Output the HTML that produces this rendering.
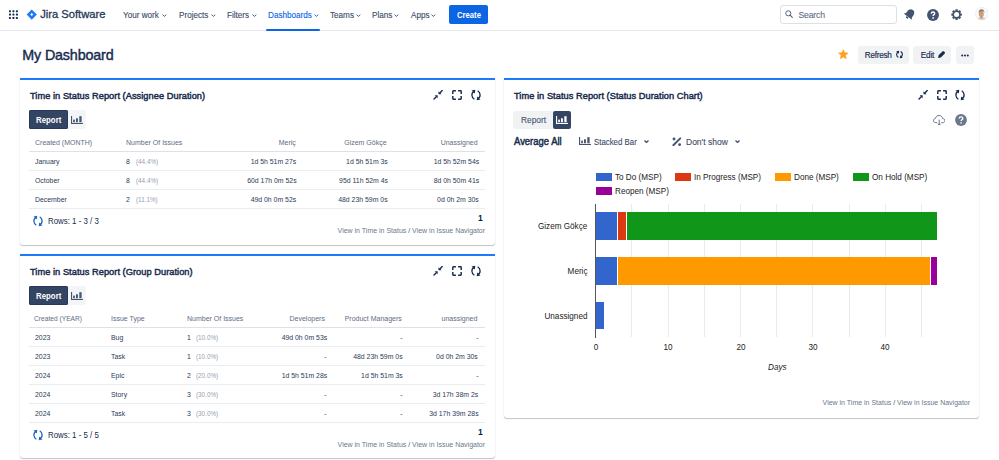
<!DOCTYPE html>
<html><head><meta charset="utf-8">
<style>
*{box-sizing:border-box;margin:0;padding:0}
html,body{width:999px;height:460px;overflow:hidden;background:#fff}
body{position:relative;font-family:"Liberation Sans",sans-serif;color:#172b4d}
.a{position:absolute;white-space:nowrap}
.t{position:absolute;white-space:nowrap;line-height:12px}
.nav{font-size:8.8px;color:#3b4b66;top:9.3px;-webkit-text-stroke:0.12px #3b4b66;transform:scaleX(.925);transform-origin:0 50%}
.chev{position:absolute;width:5px;height:3px}
.panel{position:absolute;background:#fff;border-top:2px solid #1d7afc;border-radius:0 0 3px 3px;box-shadow:0 1px 1px rgba(9,30,66,.25),0 0 1px rgba(9,30,66,.18)}
.ptitle{font-size:9.4px;color:#172b4d;transform:scaleX(.985);-webkit-text-stroke:0.45px #172b4d;letter-spacing:0.05px}
.th{font-size:7.7px;color:#5e6c84;transform:scaleX(.91)}
.td{font-size:7.9px;color:#2b3b56;transform:scaleX(.873)}
.rows{font-size:9.5px;color:#172b4d;transform:scaleX(.83)}
.vw{font-size:7.7px;color:#6b778c;transform:scaleX(.91)}
.pc{color:#97a0af}
.hl{position:absolute;height:1px;background:#ebecf0}
.hl2{position:absolute;height:1px;background:#dfe1e6}
.r{text-align:right}
.gl{position:absolute;width:1px;background:#ebebeb;top:204px;height:133px}
.ct{font-size:8.8px;color:#222;transform:scaleX(.926)}
.sq{position:absolute;width:16px;height:8px}
</style></head><body>

<!-- ===== HEADER ===== -->
<div class="a" style="left:0;top:30px;width:999px;height:1px;background:#e4e6ea"></div>
<!-- grid icon -->
<svg class="a" style="left:0;top:0" width="40" height="30" viewBox="0 0 40 30"><g fill="#172b4d"><rect x="8.98" y="10.18" width="2.0" height="2.0" rx="0.45"/><rect x="8.98" y="13.60" width="2.0" height="2.0" rx="0.45"/><rect x="8.98" y="17.05" width="2.0" height="2.0" rx="0.45"/><rect x="12.43" y="10.18" width="2.0" height="2.0" rx="0.45"/><rect x="12.43" y="13.60" width="2.0" height="2.0" rx="0.45"/><rect x="12.43" y="17.05" width="2.0" height="2.0" rx="0.45"/><rect x="15.92" y="10.18" width="2.0" height="2.0" rx="0.45"/><rect x="15.92" y="13.60" width="2.0" height="2.0" rx="0.45"/><rect x="15.92" y="17.05" width="2.0" height="2.0" rx="0.45"/></g>
<path d="M31.75 9.5 L36.85 14.6 L31.75 19.7 L26.65 14.6 Z" fill="#1d7afc"/><path d="M31.75 13.1 L33.25 14.6 L31.75 16.1 L30.25 14.6 Z" fill="#fff"/></svg>
<div class="t" style="left:40.2px;top:8.2px;font-size:11.2px;color:#253858;-webkit-text-stroke:0.3px #253858">Jira Software</div>

<div class="t nav" style="left:122.5px">Your work</div>
<div class="t nav" style="left:178.8px">Projects</div>
<div class="t nav" style="left:227px">Filters</div>
<div class="t nav" style="left:267.8px;color:#0c66e4;-webkit-text-stroke:0.12px #0c66e4">Dashboards</div>
<div class="t nav" style="left:330.4px">Teams</div>
<div class="t nav" style="left:372.4px">Plans</div>
<div class="t nav" style="left:410.8px">Apps</div>
<svg class="a" style="left:162.2px;top:13.6px" width="4.8" height="3" viewBox="0 0 5 3"><path d="M.5 .6 L2.5 2.4 L4.5 .6" fill="none" stroke="#44546f" stroke-width="1.0"/></svg>
<svg class="a" style="left:210.8px;top:13.6px" width="4.8" height="3" viewBox="0 0 5 3"><path d="M.5 .6 L2.5 2.4 L4.5 .6" fill="none" stroke="#44546f" stroke-width="1.0"/></svg>
<svg class="a" style="left:251.9px;top:13.6px" width="4.8" height="3" viewBox="0 0 5 3"><path d="M.5 .6 L2.5 2.4 L4.5 .6" fill="none" stroke="#44546f" stroke-width="1.0"/></svg>
<svg class="a" style="left:313.9px;top:13.6px" width="4.8" height="3" viewBox="0 0 5 3"><path d="M.5 .6 L2.5 2.4 L4.5 .6" fill="none" stroke="#0c66e4" stroke-width="1.0"/></svg>
<svg class="a" style="left:355.9px;top:13.6px" width="4.8" height="3" viewBox="0 0 5 3"><path d="M.5 .6 L2.5 2.4 L4.5 .6" fill="none" stroke="#44546f" stroke-width="1.0"/></svg>
<svg class="a" style="left:393.9px;top:13.6px" width="4.8" height="3" viewBox="0 0 5 3"><path d="M.5 .6 L2.5 2.4 L4.5 .6" fill="none" stroke="#44546f" stroke-width="1.0"/></svg>
<svg class="a" style="left:431.1px;top:13.6px" width="4.8" height="3" viewBox="0 0 5 3"><path d="M.5 .6 L2.5 2.4 L4.5 .6" fill="none" stroke="#44546f" stroke-width="1.0"/></svg>
<div class="a" style="left:266px;top:29px;width:54px;height:2px;background:#0c66e4;border-radius:1px"></div>
<div class="a" style="left:449px;top:5px;width:38.5px;height:19px;background:#0c66e4;border-radius:2px"></div>
<div class="t" style="left:456.6px;top:8.5px;font-size:8.5px;font-weight:bold;color:#fff;transform:scaleX(.905);transform-origin:0 50%">Create</div>

<!-- search -->
<div class="a" style="left:780px;top:5px;width:117px;height:19px;border:1px solid #dcdfe4;border-radius:3px"></div>
<svg class="a" style="left:785px;top:10.2px" width="8" height="8" viewBox="0 0 8 8"><circle cx="3.3" cy="3.3" r="2.55" fill="none" stroke="#505f79" stroke-width="0.95"/><path d="M5.1 5.1 L7.3 7.3" stroke="#505f79" stroke-width="1.1" stroke-linecap="round"/></svg>
<div class="t" style="left:798.5px;top:8.8px;font-size:8.7px;letter-spacing:-0.2px;color:#5e6c84;-webkit-text-stroke:0.1px #5e6c84">Search</div>
<!-- bell -->
<svg class="a" style="left:904.3px;top:9.3px" width="11.5" height="10.5" viewBox="0 0 11 10"><g transform="rotate(38 5.8 5)"><path d="M5.5 0.2 C3.2 0.2 2.0 2.0 2.0 4.3 L2.0 6.3 L0.6 8.2 L10.4 8.2 L9.0 6.3 L9.0 4.3 C9.0 2.0 7.8 0.2 5.5 0.2 Z" fill="#44546f"/><ellipse cx="5.5" cy="9.2" rx="1.3" ry="0.9" fill="#44546f"/></g></svg>
<!-- help -->
<svg class="a" style="left:927.2px;top:9.1px" width="12" height="12" viewBox="0 0 12 12"><circle cx="6" cy="6" r="5.95" fill="#44546f"/><path d="M4.3 4.7 C4.3 3.6 5 3 6 3 C7 3 7.7 3.6 7.7 4.5 C7.7 5.5 6.4 5.8 6.1 6.6 L6.1 7.1" fill="none" stroke="#fff" stroke-width="1.35"/><circle cx="6.1" cy="8.9" r=".85" fill="#fff"/></svg>
<!-- gear -->
<svg class="a" style="left:950.8px;top:9.2px" width="11.2" height="11.2" viewBox="0 0 12 12"><g fill="#44546f"><circle cx="6" cy="6" r="4.4"/><rect x="4.7" y="0.3" width="2.6" height="3" rx="0.5" transform="rotate(0 6 6)"/><rect x="4.7" y="0.3" width="2.6" height="3" rx="0.5" transform="rotate(45 6 6)"/><rect x="4.7" y="0.3" width="2.6" height="3" rx="0.5" transform="rotate(90 6 6)"/><rect x="4.7" y="0.3" width="2.6" height="3" rx="0.5" transform="rotate(135 6 6)"/><rect x="4.7" y="0.3" width="2.6" height="3" rx="0.5" transform="rotate(180 6 6)"/><rect x="4.7" y="0.3" width="2.6" height="3" rx="0.5" transform="rotate(225 6 6)"/><rect x="4.7" y="0.3" width="2.6" height="3" rx="0.5" transform="rotate(270 6 6)"/><rect x="4.7" y="0.3" width="2.6" height="3" rx="0.5" transform="rotate(315 6 6)"/></g><circle cx="6" cy="6" r="2.7" fill="#fff"/></svg>
<!-- avatar -->
<svg class="a" style="left:974.6px;top:7.4px" width="13.6" height="13.4" viewBox="0 0 14 14"><defs><clipPath id="avc"><circle cx="7" cy="7" r="6.4"/></clipPath></defs><circle cx="7" cy="7" r="6.9" fill="#d6eaf6"/><g clip-path="url(#avc)"><rect x="0" y="0" width="14" height="14" fill="#f6f8f9"/><ellipse cx="6.5" cy="7.2" rx="2.6" ry="3.3" fill="#cf9c7c"/><path d="M3.8 6.6 C3.4 3.6 4.8 2.3 6.8 2.3 C8.8 2.3 9.9 3.6 9.6 6.2 L9.1 4.8 C8 4.2 5.6 4.3 4.4 5.2 Z" fill="#8f7d66"/><path d="M5.4 9.8 L7.8 9.8 L8 11 C9.6 11.4 10.6 12.3 10.9 14 L2.4 14 C2.7 12.3 3.6 11.4 5.2 11 Z" fill="#c49a7e"/><path d="M2.6 14 C3 12.6 4 11.8 5.4 11.5 L6.6 12.6 L7.9 11.5 C9.3 11.8 10.3 12.6 10.7 14 Z" fill="#e4e0da"/></g></svg>

<!-- ===== DASHBOARD HEADER ===== -->
<div class="t" style="left:22.3px;top:48px;font-size:14.3px;line-height:14px;color:#172b4d;letter-spacing:-0.15px;-webkit-text-stroke:0.4px #172b4d">My Dashboard</div>
<svg class="a" style="left:837.6px;top:49.3px" width="10.6" height="10.6" viewBox="0 0 24 24"><path d="M12 1.2 L15.1 8.4 L23 9.1 L17 14.3 L18.8 22.3 L12 18 L5.2 22.3 L7 14.3 L1 9.1 L8.9 8.4 Z" fill="#ff9f1a" stroke="#ff9f1a" stroke-width="1.2" stroke-linejoin="round"/></svg>
<div class="a" style="left:857.5px;top:45.5px;width:51px;height:18.5px;background:#f1f2f4;border-radius:3px"></div>
<div class="t" style="left:864.8px;top:50px;font-size:8.2px;letter-spacing:-0.27px;color:#172b4d;-webkit-text-stroke:0.15px #172b4d">Refresh</div>
<div class="a" style="left:913.3px;top:45.5px;width:37.7px;height:18.5px;background:#f1f2f4;border-radius:3px"></div>
<div class="t" style="left:920.8px;top:50px;font-size:8.2px;letter-spacing:-0.2px;color:#172b4d;-webkit-text-stroke:0.15px #172b4d">Edit</div>
<div class="a" style="left:955.7px;top:45.5px;width:18.5px;height:18.5px;background:#f1f2f4;border-radius:3px"></div>
<svg class="a" style="left:961px;top:54px" width="8" height="3" viewBox="0 0 8 3"><circle cx="1.2" cy="1.5" r="1" fill="#172b4d"/><circle cx="4" cy="1.5" r="1" fill="#172b4d"/><circle cx="6.8" cy="1.5" r="1" fill="#172b4d"/></svg>
<!-- refresh small icon -->
<svg class="a" style="left:895.6px;top:51.3px;overflow:visible" width="7" height="7" viewBox="0 0 10 10"><path d="M3.3 1.4 C1.5 2.3 0.8 3.8 0.9 5.3 C1 6.9 1.9 8.3 3.3 9.2 M6.7 0.8 C8.1 1.7 9.0 3.1 9.1 4.7 C9.2 6.2 8.5 7.7 6.7 8.6" fill="none" stroke="#172b4d" stroke-width="1.6"/><path d="M4.5 -0.3 L0.3 0.3 L3.9 3.9 Z M5.5 10.3 L9.7 9.7 L6.1 6.1 Z" fill="#172b4d"/></svg>
<!-- pencil -->
<svg class="a" style="left:937.8px;top:51.3px" width="7.2" height="7" viewBox="0 0 7 7"><path d="M0 7 L0.5 4.3 L4.3 0.5 C4.8 0 5.6 0 6.1 0.5 L6.5 0.9 C7 1.4 7 2.2 6.5 2.7 L2.7 6.5 Z" fill="#172b4d"/></svg>
<div id="panels">
<div class="panel" style="left:20px;top:78px;width:474.5px;height:167px"></div>
<div class="t ptitle" style="left:29.60px;top:90.20px;line-height:12px;transform-origin:0 50%;">Time in Status Report (Assignee Duration)</div>
<svg class="a" style="left:433.4px;top:90.2px" width="10" height="10" viewBox="0 0 10 10"><g stroke="#172b4d" stroke-width="1.4" fill="none" stroke-linecap="round"><path d="M1.0 9.0 L3.3 6.7"/><path d="M9.2 0.6 L6.9 2.9"/></g><path d="M4.7 5.3 L1.7 5.3 L4.7 8.3 Z" fill="#172b4d"/><path d="M5.5 4.3 L8.5 4.3 L5.5 1.3 Z" fill="#172b4d"/></svg>
<svg class="a" style="left:451.7px;top:90.0px" width="10" height="10" viewBox="0 0 10 10"><path d="M0.8 3.9 V1.4 Q0.8 0.8 1.4 0.8 H3.9 M6.1 0.8 H8.6 Q9.2 0.8 9.2 1.4 V3.9 M9.2 6.1 V8.6 Q9.2 9.2 8.6 9.2 H6.1 M3.9 9.2 H1.4 Q0.8 9.2 0.8 8.6 V6.1" fill="none" stroke="#172b4d" stroke-width="1.45"/></svg>
<svg class="a" style="left:470.8px;top:90.1px;overflow:visible" width="10" height="10" viewBox="0 0 10 10"><path d="M3.3 1.4 C1.5 2.3 0.8 3.8 0.9 5.3 C1 6.9 1.9 8.3 3.3 9.2 M6.7 0.8 C8.1 1.7 9.0 3.1 9.1 4.7 C9.2 6.2 8.5 7.7 6.7 8.6" fill="none" stroke="#172b4d" stroke-width="1.3"/><path d="M4.3 -0.2 L0.5 0.4 L3.8 3.6 Z M5.7 10.2 L9.5 9.6 L6.2 6.4 Z" fill="#172b4d"/></svg>
<div class="a" style="left:28.8px;top:110.4px;width:39px;height:18.3px;background:#344563;border-radius:2px;box-shadow:inset 0 0 0 0.8px #23355a"></div>
<div class="a" style="left:67.8px;top:110.4px;width:17.8px;height:18.3px;background:#f4f5f7;border-radius:0 2px 2px 0"></div>
<div class="t " style="left:35.70px;top:113.90px;line-height:12px;transform-origin:0 50%;font-size:8.6px;font-weight:bold;color:#fff;transform:scaleX(.915)">Report</div>
<svg class="a" style="left:71.1px;top:115.8px" width="12" height="8" viewBox="0 0 12 8"><g fill="#44546f"><rect x="0" y="0" width="1.1" height="8"/><rect x="0" y="6.9" width="12" height="1.1"/><rect x="2.2" y="3.6" width="1.7" height="2.6"/><rect x="5.0" y="2.3" width="1.9" height="3.9"/><rect x="8.3" y="0.2" width="2.3" height="6.0"/></g></svg>
<div class="t th" style="left:34.60px;top:136.90px;line-height:12px;transform-origin:0 50%;">Created (MONTH)</div>
<div class="t th" style="left:125.90px;top:136.90px;line-height:12px;transform-origin:0 50%;">Number Of Issues</div>
<div class="t th" style="right:703.40px;top:136.90px;line-height:12px;transform-origin:100% 50%;">Meriç</div>
<div class="t th" style="right:612.70px;top:136.90px;line-height:12px;transform-origin:100% 50%;">Gizem Gökçe</div>
<div class="t th" style="right:521.50px;top:136.90px;line-height:12px;transform-origin:100% 50%;">Unassigned</div>
<div class="hl2" style="left:29px;top:151px;width:456px;height:1px"></div>
<div class="t td" style="left:34.60px;top:156.10px;line-height:12px;transform-origin:0 50%;">January</div>
<div class="t td" style="left:126.30px;top:156.10px;line-height:12px;transform-origin:0 50%;">8</div>
<div class="t td pc" style="left:135.90px;top:156.10px;line-height:12px;transform-origin:0 50%;transform:scaleX(.8)">(44.4%)</div>
<div class="t td" style="right:702.50px;top:156.10px;line-height:12px;transform-origin:100% 50%;">1d 5h 51m 27s</div>
<div class="t td" style="right:611.40px;top:156.10px;line-height:12px;transform-origin:100% 50%;">1d 5h 51m 3s</div>
<div class="t td" style="right:520.00px;top:156.10px;line-height:12px;transform-origin:100% 50%;">1d 5h 52m 54s</div>
<div class="hl" style="left:29px;top:169.7px;width:456px"></div>
<div class="t td" style="left:34.60px;top:175.00px;line-height:12px;transform-origin:0 50%;">October</div>
<div class="t td" style="left:126.30px;top:175.00px;line-height:12px;transform-origin:0 50%;">8</div>
<div class="t td pc" style="left:135.90px;top:175.00px;line-height:12px;transform-origin:0 50%;transform:scaleX(.8)">(44.4%)</div>
<div class="t td" style="right:702.50px;top:175.00px;line-height:12px;transform-origin:100% 50%;">60d 17h 0m 52s</div>
<div class="t td" style="right:611.40px;top:175.00px;line-height:12px;transform-origin:100% 50%;">95d 11h 52m 4s</div>
<div class="t td" style="right:520.00px;top:175.00px;line-height:12px;transform-origin:100% 50%;">8d 0h 50m 41s</div>
<div class="hl" style="left:29px;top:188.6px;width:456px"></div>
<div class="t td" style="left:34.60px;top:193.90px;line-height:12px;transform-origin:0 50%;">December</div>
<div class="t td" style="left:126.30px;top:193.90px;line-height:12px;transform-origin:0 50%;">2</div>
<div class="t td pc" style="left:135.90px;top:193.90px;line-height:12px;transform-origin:0 50%;transform:scaleX(.8)">(11.1%)</div>
<div class="t td" style="right:702.50px;top:193.90px;line-height:12px;transform-origin:100% 50%;">49d 0h 0m 52s</div>
<div class="t td" style="right:611.40px;top:193.90px;line-height:12px;transform-origin:100% 50%;">48d 23h 59m 0s</div>
<div class="t td" style="right:520.00px;top:193.90px;line-height:12px;transform-origin:100% 50%;">0d 0h 2m 30s</div>
<div class="hl" style="left:29px;top:207.5px;width:456px"></div>
<svg class="a" style="left:33.3px;top:216.3px;overflow:visible" width="10" height="10" viewBox="0 0 10 10"><path d="M3.3 1.4 C1.5 2.3 0.8 3.8 0.9 5.3 C1 6.9 1.9 8.3 3.3 9.2 M6.7 0.8 C8.1 1.7 9.0 3.1 9.1 4.7 C9.2 6.2 8.5 7.7 6.7 8.6" fill="none" stroke="#2166c2" stroke-width="1.3"/><path d="M4.3 -0.2 L0.5 0.4 L3.8 3.6 Z M5.7 10.2 L9.5 9.6 L6.2 6.4 Z" fill="#2166c2"/></svg>
<div class="t rows" style="left:47.60px;top:215.00px;line-height:12px;transform-origin:0 50%;">Rows: 1 - 3 / 3</div>
<div class="t " style="right:516.40px;top:211.60px;line-height:12px;transform-origin:100% 50%;font-size:8.5px;font-weight:bold;color:#091e42">1</div>
<div class="t vw" style="right:514.20px;top:224.80px;line-height:12px;transform-origin:100% 50%;">View in Time in Status <span style="color:#44546f">/</span> View in Issue Navigator</div>
<div class="panel" style="left:20px;top:254px;width:474.5px;height:204px"></div>
<div class="t ptitle" style="left:29.60px;top:266.20px;line-height:12px;transform-origin:0 50%;">Time in Status Report (Group Duration)</div>
<svg class="a" style="left:433.4px;top:266.2px" width="10" height="10" viewBox="0 0 10 10"><g stroke="#172b4d" stroke-width="1.4" fill="none" stroke-linecap="round"><path d="M1.0 9.0 L3.3 6.7"/><path d="M9.2 0.6 L6.9 2.9"/></g><path d="M4.7 5.3 L1.7 5.3 L4.7 8.3 Z" fill="#172b4d"/><path d="M5.5 4.3 L8.5 4.3 L5.5 1.3 Z" fill="#172b4d"/></svg>
<svg class="a" style="left:451.7px;top:266.0px" width="10" height="10" viewBox="0 0 10 10"><path d="M0.8 3.9 V1.4 Q0.8 0.8 1.4 0.8 H3.9 M6.1 0.8 H8.6 Q9.2 0.8 9.2 1.4 V3.9 M9.2 6.1 V8.6 Q9.2 9.2 8.6 9.2 H6.1 M3.9 9.2 H1.4 Q0.8 9.2 0.8 8.6 V6.1" fill="none" stroke="#172b4d" stroke-width="1.45"/></svg>
<svg class="a" style="left:470.8px;top:266.1px;overflow:visible" width="10" height="10" viewBox="0 0 10 10"><path d="M3.3 1.4 C1.5 2.3 0.8 3.8 0.9 5.3 C1 6.9 1.9 8.3 3.3 9.2 M6.7 0.8 C8.1 1.7 9.0 3.1 9.1 4.7 C9.2 6.2 8.5 7.7 6.7 8.6" fill="none" stroke="#172b4d" stroke-width="1.3"/><path d="M4.3 -0.2 L0.5 0.4 L3.8 3.6 Z M5.7 10.2 L9.5 9.6 L6.2 6.4 Z" fill="#172b4d"/></svg>
<div class="a" style="left:28.8px;top:286.4px;width:39px;height:18.3px;background:#344563;border-radius:2px;box-shadow:inset 0 0 0 0.8px #23355a"></div>
<div class="a" style="left:67.8px;top:286.4px;width:17.8px;height:18.3px;background:#f4f5f7;border-radius:0 2px 2px 0"></div>
<div class="t " style="left:35.70px;top:289.90px;line-height:12px;transform-origin:0 50%;font-size:8.6px;font-weight:bold;color:#fff;transform:scaleX(.915)">Report</div>
<svg class="a" style="left:71.1px;top:291.8px" width="12" height="8" viewBox="0 0 12 8"><g fill="#44546f"><rect x="0" y="0" width="1.1" height="8"/><rect x="0" y="6.9" width="12" height="1.1"/><rect x="2.2" y="3.6" width="1.7" height="2.6"/><rect x="5.0" y="2.3" width="1.9" height="3.9"/><rect x="8.3" y="0.2" width="2.3" height="6.0"/></g></svg>
<div class="t th" style="left:34.30px;top:313.10px;line-height:12px;transform-origin:0 50%;"><span style="display:inline-block;transform:scaleX(.95);transform-origin:0 50%">Created (YEAR)</span></div>
<div class="t th" style="left:110.60px;top:313.10px;line-height:12px;transform-origin:0 50%;">Issue Type</div>
<div class="t th" style="left:186.70px;top:313.10px;line-height:12px;transform-origin:0 50%;">Number Of Issues</div>
<div class="t th" style="right:673.80px;top:313.10px;line-height:12px;transform-origin:100% 50%;">Developers</div>
<div class="t th" style="right:597.40px;top:313.10px;line-height:12px;transform-origin:100% 50%;">Product Managers</div>
<div class="t th" style="right:521.60px;top:313.10px;line-height:12px;transform-origin:100% 50%;">unassigned</div>
<div class="hl2" style="left:29px;top:327px;width:456px;height:1px"></div>
<div class="t td" style="left:34.60px;top:332.30px;line-height:12px;transform-origin:0 50%;">2023</div>
<div class="t td" style="left:110.60px;top:332.30px;line-height:12px;transform-origin:0 50%;">Bug</div>
<div class="t td" style="left:186.70px;top:332.30px;line-height:12px;transform-origin:0 50%;">1</div>
<div class="t td pc" style="left:196.40px;top:332.30px;line-height:12px;transform-origin:0 50%;transform:scaleX(.8)">(10.0%)</div>
<div class="t td" style="right:672.00px;top:332.30px;line-height:12px;transform-origin:100% 50%;">49d 0h 0m 53s</div>
<div class="t td" style="right:596.60px;top:332.30px;line-height:12px;transform-origin:100% 50%;">-</div>
<div class="t td" style="right:520.80px;top:332.30px;line-height:12px;transform-origin:100% 50%;">-</div>
<div class="hl" style="left:29px;top:346.1px;width:456px"></div>
<div class="t td" style="left:34.60px;top:351.20px;line-height:12px;transform-origin:0 50%;">2023</div>
<div class="t td" style="left:110.60px;top:351.20px;line-height:12px;transform-origin:0 50%;">Task</div>
<div class="t td" style="left:186.70px;top:351.20px;line-height:12px;transform-origin:0 50%;">1</div>
<div class="t td pc" style="left:196.40px;top:351.20px;line-height:12px;transform-origin:0 50%;transform:scaleX(.8)">(10.0%)</div>
<div class="t td" style="right:672.00px;top:351.20px;line-height:12px;transform-origin:100% 50%;">-</div>
<div class="t td" style="right:596.60px;top:351.20px;line-height:12px;transform-origin:100% 50%;">48d 23h 59m 0s</div>
<div class="t td" style="right:520.80px;top:351.20px;line-height:12px;transform-origin:100% 50%;">0d 0h 2m 30s</div>
<div class="hl" style="left:29px;top:365.0px;width:456px"></div>
<div class="t td" style="left:34.60px;top:370.10px;line-height:12px;transform-origin:0 50%;">2024</div>
<div class="t td" style="left:110.60px;top:370.10px;line-height:12px;transform-origin:0 50%;">Epic</div>
<div class="t td" style="left:186.70px;top:370.10px;line-height:12px;transform-origin:0 50%;">2</div>
<div class="t td pc" style="left:196.40px;top:370.10px;line-height:12px;transform-origin:0 50%;transform:scaleX(.8)">(20.0%)</div>
<div class="t td" style="right:672.00px;top:370.10px;line-height:12px;transform-origin:100% 50%;">1d 5h 51m 28s</div>
<div class="t td" style="right:596.60px;top:370.10px;line-height:12px;transform-origin:100% 50%;">1d 5h 51m 3s</div>
<div class="t td" style="right:520.80px;top:370.10px;line-height:12px;transform-origin:100% 50%;">-</div>
<div class="hl" style="left:29px;top:383.9px;width:456px"></div>
<div class="t td" style="left:34.60px;top:389.00px;line-height:12px;transform-origin:0 50%;">2024</div>
<div class="t td" style="left:110.60px;top:389.00px;line-height:12px;transform-origin:0 50%;">Story</div>
<div class="t td" style="left:186.70px;top:389.00px;line-height:12px;transform-origin:0 50%;">3</div>
<div class="t td pc" style="left:196.40px;top:389.00px;line-height:12px;transform-origin:0 50%;transform:scaleX(.8)">(30.0%)</div>
<div class="t td" style="right:672.00px;top:389.00px;line-height:12px;transform-origin:100% 50%;">-</div>
<div class="t td" style="right:596.60px;top:389.00px;line-height:12px;transform-origin:100% 50%;">-</div>
<div class="t td" style="right:520.80px;top:389.00px;line-height:12px;transform-origin:100% 50%;">3d 17h 38m 2s</div>
<div class="hl" style="left:29px;top:402.9px;width:456px"></div>
<div class="t td" style="left:34.60px;top:407.90px;line-height:12px;transform-origin:0 50%;">2024</div>
<div class="t td" style="left:110.60px;top:407.90px;line-height:12px;transform-origin:0 50%;">Task</div>
<div class="t td" style="left:186.70px;top:407.90px;line-height:12px;transform-origin:0 50%;">3</div>
<div class="t td pc" style="left:196.40px;top:407.90px;line-height:12px;transform-origin:0 50%;transform:scaleX(.8)">(30.0%)</div>
<div class="t td" style="right:672.00px;top:407.90px;line-height:12px;transform-origin:100% 50%;">-</div>
<div class="t td" style="right:596.60px;top:407.90px;line-height:12px;transform-origin:100% 50%;">-</div>
<div class="t td" style="right:520.80px;top:407.90px;line-height:12px;transform-origin:100% 50%;">3d 17h 39m 28s</div>
<div class="hl" style="left:29px;top:421.8px;width:456px"></div>
<svg class="a" style="left:33.3px;top:430.4px;overflow:visible" width="10" height="10" viewBox="0 0 10 10"><path d="M3.3 1.4 C1.5 2.3 0.8 3.8 0.9 5.3 C1 6.9 1.9 8.3 3.3 9.2 M6.7 0.8 C8.1 1.7 9.0 3.1 9.1 4.7 C9.2 6.2 8.5 7.7 6.7 8.6" fill="none" stroke="#2166c2" stroke-width="1.3"/><path d="M4.3 -0.2 L0.5 0.4 L3.8 3.6 Z M5.7 10.2 L9.5 9.6 L6.2 6.4 Z" fill="#2166c2"/></svg>
<div class="t rows" style="left:47.60px;top:429.20px;line-height:12px;transform-origin:0 50%;">Rows: 1 - 5 / 5</div>
<div class="t " style="right:516.40px;top:426.00px;line-height:12px;transform-origin:100% 50%;font-size:8.5px;font-weight:bold;color:#091e42">1</div>
<div class="t vw" style="right:514.20px;top:439.00px;line-height:12px;transform-origin:100% 50%;">View in Time in Status <span style="color:#44546f">/</span> View in Issue Navigator</div>
<div class="panel" style="left:504px;top:78px;width:475px;height:340px"></div>
<div class="t ptitle" style="left:513.90px;top:90.20px;line-height:12px;transform-origin:0 50%;">Time in Status Report (Status Duration Chart)</div>
<svg class="a" style="left:917.8px;top:90.2px" width="10" height="10" viewBox="0 0 10 10"><g stroke="#172b4d" stroke-width="1.4" fill="none" stroke-linecap="round"><path d="M1.0 9.0 L3.3 6.7"/><path d="M9.2 0.6 L6.9 2.9"/></g><path d="M4.7 5.3 L1.7 5.3 L4.7 8.3 Z" fill="#172b4d"/><path d="M5.5 4.3 L8.5 4.3 L5.5 1.3 Z" fill="#172b4d"/></svg>
<svg class="a" style="left:937px;top:90.0px" width="10" height="10" viewBox="0 0 10 10"><path d="M0.8 3.9 V1.4 Q0.8 0.8 1.4 0.8 H3.9 M6.1 0.8 H8.6 Q9.2 0.8 9.2 1.4 V3.9 M9.2 6.1 V8.6 Q9.2 9.2 8.6 9.2 H6.1 M3.9 9.2 H1.4 Q0.8 9.2 0.8 8.6 V6.1" fill="none" stroke="#172b4d" stroke-width="1.45"/></svg>
<svg class="a" style="left:955.1px;top:90.1px;overflow:visible" width="10" height="10" viewBox="0 0 10 10"><path d="M3.3 1.4 C1.5 2.3 0.8 3.8 0.9 5.3 C1 6.9 1.9 8.3 3.3 9.2 M6.7 0.8 C8.1 1.7 9.0 3.1 9.1 4.7 C9.2 6.2 8.5 7.7 6.7 8.6" fill="none" stroke="#172b4d" stroke-width="1.3"/><path d="M4.3 -0.2 L0.5 0.4 L3.8 3.6 Z M5.7 10.2 L9.5 9.6 L6.2 6.4 Z" fill="#172b4d"/></svg>
<div class="a" style="left:513.3px;top:110.7px;width:40px;height:18.5px;background:#f1f2f4;border-radius:2px 0 0 2px"></div>
<div class="a" style="left:553.0px;top:110.7px;width:18px;height:18.5px;background:#344563;border-radius:2px"></div>
<div class="t " style="left:520.70px;top:114.00px;line-height:12px;transform-origin:0 50%;font-size:9px;color:#44546f;transform:scaleX(.93);-webkit-text-stroke:0.1px #44546f">Report</div>
<svg class="a" style="left:556.3px;top:116.2px" width="12" height="8" viewBox="0 0 12 8"><g fill="#fff"><rect x="0" y="0" width="1.1" height="8"/><rect x="0" y="6.9" width="12" height="1.1"/><rect x="2.2" y="3.6" width="1.7" height="2.6"/><rect x="5.0" y="2.3" width="1.9" height="3.9"/><rect x="8.3" y="0.2" width="2.3" height="6.0"/></g></svg>
<svg class="a" style="left:932.8px;top:114.6px" width="12.4" height="10.8" viewBox="0 0 12.4 10.8"><path d="M4 7.6 H2.6 C1.4 7.6 0.5 6.7 0.5 5.5 C0.5 4.4 1.3 3.5 2.4 3.4 C2.7 1.7 4.2 0.5 6.1 0.5 C7.9 0.5 9.4 1.8 9.7 3.5 C10.9 3.6 11.9 4.5 11.9 5.6 C11.9 6.7 11 7.6 9.8 7.6 H8.4" fill="none" stroke="#5e6c84" stroke-width="0.95"/><path d="M6.2 4.6 V10.2 M4.6 8.6 L6.2 10.2 L7.8 8.6" fill="none" stroke="#5e6c84" stroke-width="0.95"/></svg>
<svg class="a" style="left:954.5px;top:113.8px" width="12" height="12" viewBox="0 0 12 12"><circle cx="6" cy="6" r="5.9" fill="#6b778c"/><path d="M4.2 4.6 C4.2 3.5 5 2.9 6 2.9 C7.1 2.9 7.8 3.6 7.8 4.5 C7.8 5.6 6.5 5.8 6.2 6.6 L6.2 7" fill="none" stroke="#fff" stroke-width="1.3"/><circle cx="6.1" cy="8.9" r=".8" fill="#fff"/></svg>
<div class="t " style="left:513.80px;top:136.40px;line-height:12px;transform-origin:0 50%;font-size:10px;transform:scaleX(.945);-webkit-text-stroke:0.45px #172b4d;color:#172b4d">Average All</div>
<svg class="a" style="left:579px;top:137.4px" width="12" height="8" viewBox="0 0 12 8"><g fill="#44546f"><rect x="0" y="0" width="1.1" height="8"/><rect x="0" y="6.9" width="12" height="1.1"/><rect x="2.2" y="3.6" width="1.7" height="2.6"/><rect x="5.0" y="2.3" width="1.9" height="3.9"/><rect x="8.3" y="0.2" width="2.3" height="6.0"/></g></svg>
<div class="t " style="left:594.40px;top:135.60px;line-height:12px;transform-origin:0 50%;font-size:8.6px;transform:scaleX(.913);color:#3b4b66;-webkit-text-stroke:0.1px #3b4b66">Stacked Bar</div>
<svg class="chev" style="left:644px;top:140px" viewBox="0 0 5 3"><path d="M.5 .5 L2.5 2.5 L4.5 .5" fill="none" stroke="#44546f" stroke-width="1.3"/></svg>
<svg class="a" style="left:672.3px;top:136.5px" width="9.6" height="9.6" viewBox="0 0 10 10"><path d="M1.4 8.6 L8.6 1.4" stroke="#44546f" stroke-width="2" stroke-linecap="round"/><circle cx="2.1" cy="2.1" r="1.5" fill="#44546f"/><circle cx="7.9" cy="7.9" r="1.5" fill="#44546f"/></svg>
<div class="t " style="left:686.00px;top:135.60px;line-height:12px;transform-origin:0 50%;font-size:9px;transform:scaleX(.945);color:#3b4b66;-webkit-text-stroke:0.1px #3b4b66">Don&#39;t show</div>
<svg class="chev" style="left:734.5px;top:140px" viewBox="0 0 5 3"><path d="M.5 .5 L2.5 2.5 L4.5 .5" fill="none" stroke="#44546f" stroke-width="1.3"/></svg>
<div class="sq" style="left:595.7px;top:173.2px;background:#3366cc"></div>
<div class="t ct" style="left:615.00px;top:171.30px;line-height:12px;transform-origin:0 50%;">To Do (MSP)</div>
<div class="sq" style="left:675.0px;top:173.2px;background:#dc3912"></div>
<div class="t ct" style="left:694.30px;top:171.30px;line-height:12px;transform-origin:0 50%;">In Progress (MSP)</div>
<div class="sq" style="left:775.1px;top:173.2px;background:#ff9900"></div>
<div class="t ct" style="left:794.40px;top:171.30px;line-height:12px;transform-origin:0 50%;">Done (MSP)</div>
<div class="sq" style="left:853.0px;top:173.2px;background:#109618"></div>
<div class="t ct" style="left:872.30px;top:171.30px;line-height:12px;transform-origin:0 50%;">On Hold (MSP)</div>
<div class="sq" style="left:595.7px;top:186.8px;background:#990099"></div>
<div class="t ct" style="left:615.00px;top:184.90px;line-height:12px;transform-origin:0 50%;">Reopen (MSP)</div>
<div class="gl" style="left:631.33px"></div>
<div class="gl" style="left:667.55px"></div>
<div class="gl" style="left:703.77px"></div>
<div class="gl" style="left:740.00px"></div>
<div class="gl" style="left:776.23px"></div>
<div class="gl" style="left:812.45px"></div>
<div class="gl" style="left:848.68px"></div>
<div class="gl" style="left:884.90px"></div>
<div class="gl" style="left:921.12px"></div>
<div class="a" style="left:595.60px;top:212.4px;width:21.70px;height:27.400000000000006px;background:#3366cc"></div>
<div class="a" style="left:618.10px;top:212.4px;width:8.10px;height:27.400000000000006px;background:#dc3912"></div>
<div class="a" style="left:626.90px;top:212.4px;width:310.50px;height:27.400000000000006px;background:#109618"></div>
<div class="a" style="left:595.60px;top:257px;width:21.90px;height:27.69999999999999px;background:#3366cc"></div>
<div class="a" style="left:618.10px;top:257px;width:311.90px;height:27.69999999999999px;background:#ff9900"></div>
<div class="a" style="left:930.60px;top:257px;width:6.80px;height:27.69999999999999px;background:#990099"></div>
<div class="a" style="left:595.60px;top:302px;width:8.40px;height:27.399999999999977px;background:#3366cc"></div>
<div class="a" style="left:595px;top:203.5px;width:1px;height:134px;background:#555"></div>
<div class="t ct" style="right:411.80px;top:220.20px;line-height:12px;transform-origin:100% 50%;">Gizem Gökçe</div>
<div class="t ct" style="right:411.80px;top:264.90px;line-height:12px;transform-origin:100% 50%;">Meriç</div>
<div class="t ct" style="right:411.80px;top:309.60px;line-height:12px;transform-origin:100% 50%;">Unassigned</div>
<div class="t ct" style="left:575.60px;width:40px;text-align:center;top:341.4px">0</div>
<div class="t ct" style="left:648.05px;width:40px;text-align:center;top:341.4px">10</div>
<div class="t ct" style="left:720.50px;width:40px;text-align:center;top:341.4px">20</div>
<div class="t ct" style="left:792.95px;width:40px;text-align:center;top:341.4px">30</div>
<div class="t ct" style="left:865.40px;width:40px;text-align:center;top:341.4px">40</div>
<div class="t ct" style="left:767.80px;top:360.60px;line-height:12px;transform-origin:0 50%;font-style:italic">Days</div>
<div class="t vw" style="right:29.00px;top:397.20px;line-height:12px;transform-origin:100% 50%;">View in Time in Status <span style="color:#44546f">/</span> View in Issue Navigator</div>
</div>
</body></html>
